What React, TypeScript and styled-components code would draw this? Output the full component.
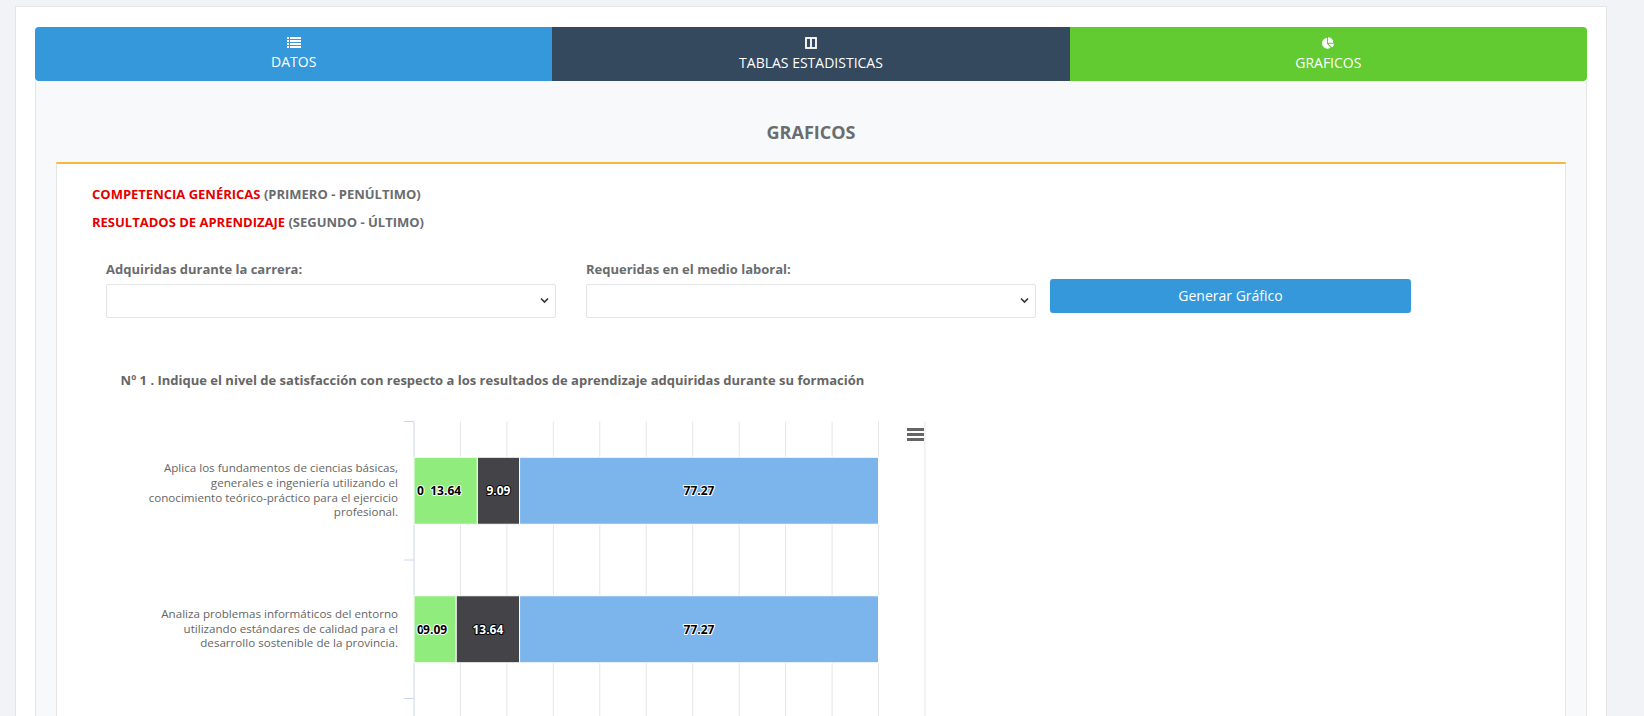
import React from 'react';
import styled, { createGlobalStyle } from 'styled-components';
import { FaChartPie } from 'react-icons/fa';

const GlobalStyle = createGlobalStyle`
  html, body {
    margin: 0;
    padding: 0;
    overflow: hidden;
  }
  body {
    background: #f1f3f6;
    font-family: "Open Sans", "Liberation Sans", sans-serif;
    font-size: 13px;
    color: #6a6c6f;
  }
`;

const Page = styled.div`
  padding: 6px 37px 0 15px;
`;

const Card = styled.div`
  background: #fff;
  border: 1px solid #e4e5e7;
  padding: 20px 19px;
`;

const Tabs = styled.div`
  display: grid;
  grid-template-columns: repeat(3, 1fr);
  height: 54px;
`;

const Tab = styled.div<{ $bg: string }>`
  background: ${(p) => p.$bg};
  color: #fff;
  display: flex;
  flex-direction: column;
  align-items: center;
  justify-content: center;
  gap: 4px;
  font-size: 14px;
  line-height: 19px;
  text-transform: uppercase;
  cursor: pointer;

  &:first-child {
    border-radius: 4px 0 0 4px;
  }
  &:last-child {
    border-radius: 0 4px 4px 0;
  }
`;

const Panel = styled.div`
  background: #f7f9fa;
  border: 1px solid #e4e5e7;
  border-top: none;
  padding: 0 20px 20px;
`;

const PanelTitle = styled.h3`
  margin: 0;
  padding: 40px 0 19px;
  text-align: center;
  font-size: 18px;
  line-height: 22px;
  font-weight: 700;
  color: #6a6c6f;
`;

const Box = styled.div`
  background: #fff;
  border: 1px solid #e4e5e7;
  border-top: 2px solid #f5b93f;
  padding: 21px 35px 40px;
`;

const LegendLine = styled.div`
  font-weight: 700;
  line-height: 18px;
  margin-bottom: 10px;
`;

const Red = styled.span`
  color: #e50000;
`;

const FormRow = styled.div`
  display: flex;
  align-items: flex-start;
  margin: 29px 0 0 14px;
`;

const Field = styled.div<{ $gap: number }>`
  width: 450px;
  margin-right: ${(p) => p.$gap}px;
`;

const Label = styled.label`
  display: block;
  font-weight: 700;
  line-height: 18px;
  margin-bottom: 5.5px;
`;

const SelectWrap = styled.div`
  position: relative;
`;

const Select = styled.select`
  display: block;
  width: 100%;
  height: 34px;
  border: 1px solid #e4e5e7;
  border-radius: 2px;
  background: #fff;
  appearance: none;
  font-family: inherit;
  font-size: 13px;
  color: #6a6c6f;
  padding: 0 12px;
  outline: none;
`;

const Chevron = styled.svg`
  position: absolute;
  right: 7px;
  top: 13px;
  pointer-events: none;
`;

const Button = styled.button`
  margin-top: 18.5px;
  width: 361px;
  height: 34px;
  border: none;
  border-radius: 3px;
  background: #3498db;
  color: #fff;
  font-family: inherit;
  font-size: 14px;
  cursor: pointer;
`;

const ChartBlock = styled.div`
  margin: 53px 0 0 14px;
`;

const ChartTitle = styled.div`
  padding-left: 14.6px;
  font-size: 13px;
  font-weight: 700;
  line-height: 18px;
  color: #666;
`;

const ChartSvg = styled.svg`
  display: block;
  margin-top: 11.5px;
  font-family: "Open Sans", "Liberation Sans", sans-serif;
`;

const ListIcon = () => (
  <svg width="14" height="11" viewBox="0 0 14 11">
    {[0, 1, 2, 3].map((i) => (
      <g key={i} fill="#fff">
        <rect x="0" y={i * 3} width="2" height="2" />
        <rect x="3" y={i * 3} width="11" height="2" />
      </g>
    ))}
  </svg>
);

const ColumnsIcon = () => (
  <svg width="12" height="12" viewBox="0 0 12 12" fill="none" stroke="#fff" strokeWidth="1.8">
    <rect x="1" y="1" width="10" height="10" />
    <line x1="6" y1="1" x2="6" y2="11" />
  </svg>
);

type Row = { label: string[]; values: number[] };

const rows: Row[] = [
  {
    label: [
      'Aplica los fundamentos de ciencias básicas,',
      'generales e ingeniería utilizando el',
      'conocimiento teórico-práctico para el ejercicio',
      'profesional.',
    ],
    values: [0, 13.64, 9.09, 77.27],
  },
  {
    label: [
      'Analiza problemas informáticos del entorno',
      'utilizando estándares de calidad para el',
      'desarrollo sostenible de la provincia.',
    ],
    values: [0, 9.09, 13.64, 77.27],
  },
];

const colors = ['#f7a35c', '#90ed7d', '#434348', '#7cb5ec'];
const darkBg = ['#434348'];

const X0 = 308;
const UNIT = 4.645;
const TOP = 21.5;
const BAND = 138.5;
const BAR_H = 67;

const Chart = () => {
  const grid = Array.from({ length: 12 }, (_, i) => X0 + i * UNIT * 10);
  return (
    <ChartSvg width="840" height="340">
      {grid.map((x, i) => (
        <line key={i} x1={x} y1={TOP} x2={x} y2={340} stroke={i === 0 ? '#ccd6eb' : '#e6e6e6'} strokeWidth="1" />
      ))}
      {[0, 1, 2].map((i) => (
        <line key={i} x1={X0 - 10} y1={TOP + i * BAND} x2={X0} y2={TOP + i * BAND} stroke="#ccd6eb" />
      ))}
      {rows.map((row, r) => {
        const center = TOP + r * BAND + BAND / 2;
        const y = center - BAR_H / 2;
        let acc = 0;
        const n = row.label.length;
        return (
          <g key={r}>
            {row.label.map((t, i) => (
              <text
                key={i}
                x={292}
                y={center - 1 + (i - (n - 1) / 2) * 14.6}
                textAnchor="end"
                dominantBaseline="central"
                fontSize="11.6"
                fill="#666"
              >
                {t}
              </text>
            ))}
            {row.values.map((v, i) => {
              const x = X0 + acc * UNIT;
              const w = v * UNIT;
              acc += v;
              if (w <= 0) return null;
              return <rect key={i} x={x} y={y} width={w} height={BAR_H} fill={colors[i]} stroke="#fff" strokeWidth="1" />;
            })}
            {(() => {
              let a = 0;
              return row.values.map((v, i) => {
                const x = X0 + a * UNIT;
                const w = v * UNIT;
                a += v;
                const dark = darkBg.includes(colors[i]);
                const zero = v === 0;
                return (
                  <text
                    key={i}
                    x={zero ? x + 3 : x + w / 2}
                    y={center}
                    textAnchor={zero ? 'start' : 'middle'}
                    dominantBaseline="central"
                    fontSize="12"
                    fontWeight="700"
                    fill={dark ? '#fff' : '#000'}
                    stroke={dark ? '#000' : '#fff'}
                    strokeWidth="2"
                    strokeLinejoin="round"
                    paintOrder="stroke"
                  >
                    {zero ? '0' : v.toFixed(2)}
                  </text>
                );
              });
            })()}
          </g>
        );
      })}
      <g fill="#666">
        <rect x="801" y="28" width="17" height="3" />
        <rect x="801" y="33" width="17" height="3" />
        <rect x="801" y="38" width="17" height="3" />
      </g>
    </ChartSvg>
  );
};

const SelectField = ({ label, gap }: { label: string; gap: number }) => (
  <Field $gap={gap}>
    <Label>{label}</Label>
    <SelectWrap>
      <Select defaultValue="">
        <option value=""></option>
      </Select>
      <Chevron width="9" height="7" viewBox="0 0 9 7">
        <path d="M1 1.5 L4.5 5 L8 1.5" fill="none" stroke="#333" strokeWidth="1.6" />
      </Chevron>
    </SelectWrap>
  </Field>
);

export default function App() {
  return (
    <>
      <GlobalStyle />
      <Page>
        <Card>
          <Tabs>
            <Tab $bg="#3498db">
              <ListIcon />
              <span>Datos</span>
            </Tab>
            <Tab $bg="#34495e">
              <ColumnsIcon />
              <span>Tablas Estadisticas</span>
            </Tab>
            <Tab $bg="#62cb31">
              <FaChartPie size={12} />
              <span>Graficos</span>
            </Tab>
          </Tabs>
          <Panel>
            <PanelTitle>GRAFICOS</PanelTitle>
            <Box>
              <LegendLine>
                <Red>COMPETENCIA GENÉRICAS</Red> (PRIMERO - PENÚLTIMO)
              </LegendLine>
              <LegendLine>
                <Red>RESULTADOS DE APRENDIZAJE</Red> (SEGUNDO - ÚLTIMO)
              </LegendLine>
              <FormRow>
                <SelectField label="Adquiridas durante la carrera:" gap={30} />
                <SelectField label="Requeridas en el medio laboral:" gap={14} />
                <Button>Generar Gráfico</Button>
              </FormRow>
              <ChartBlock>
                <ChartTitle>
                  Nº 1 . Indique el nivel de satisfacción con respecto a los resultados de aprendizaje adquiridas durante su formación
                </ChartTitle>
                <Chart />
              </ChartBlock>
            </Box>
          </Panel>
        </Card>
      </Page>
    </>
  );
}
